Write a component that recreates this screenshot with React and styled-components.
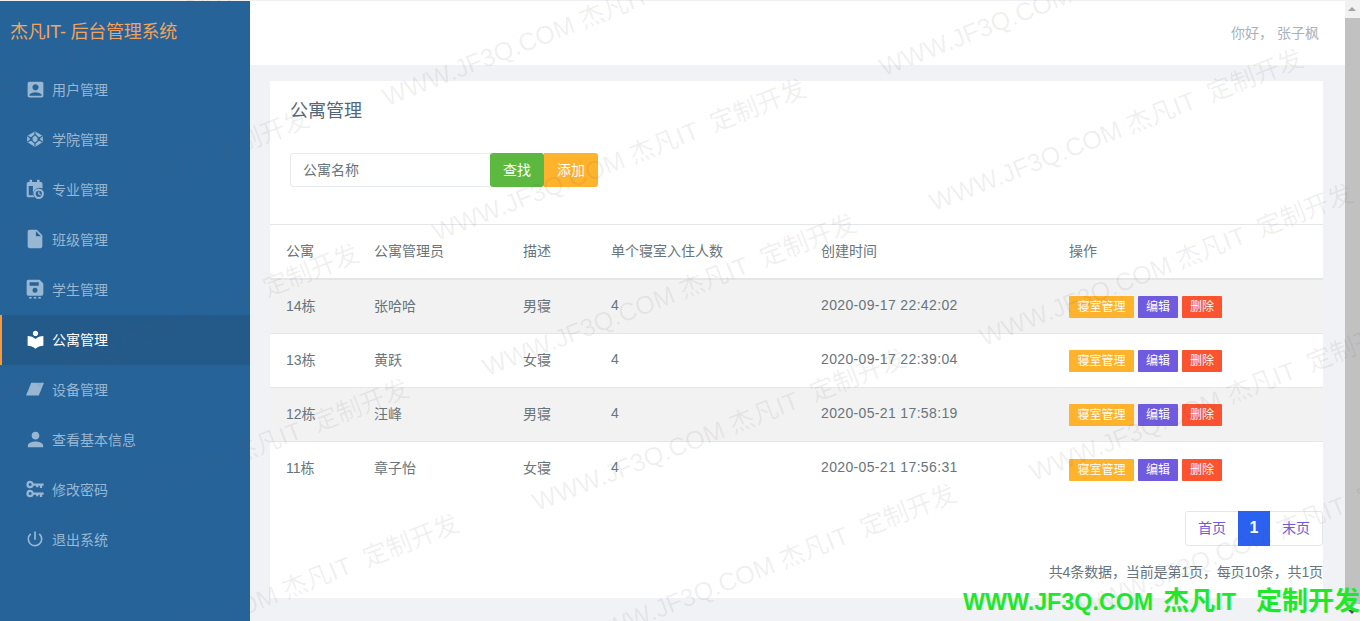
import React from 'react'
import styled, { createGlobalStyle } from 'styled-components'
import { MdAccountBox, MdInsertDriveFile, MdLocalLibrary, MdPerson, MdPowerSettingsNew } from 'react-icons/md'

const FONT = '"Liberation Sans", "Noto Sans CJK SC", sans-serif'
const SIDEBAR = '#266399'

const GlobalStyle = createGlobalStyle`
  html, body { margin: 0; padding: 0; height: 100%; overflow: hidden; }
  body { font-family: ${FONT}; background: #f0f2f5; }
  * { box-sizing: border-box; }
`

const CodepenIcon = () => (
  <svg viewBox="0 0 24 24" width="18" height="18">
    <path d="M12 1.500 L22.500 8 V16 L12 22.500 L1.500 16 V8 Z" fill="currentColor" />
    <path d="M12 6 L18.500 12 L12 18 L5.500 12 Z M12 2 V6 M12 18 V22 M2 8 L8.500 12 L2 16 M22 8 L15.500 12 L22 16" fill="none" stroke={SIDEBAR} strokeWidth="1.600" />
    <path d="M12 9.500 L14.500 12 L12 14.500 L9.500 12 Z" fill="currentColor" />
  </svg>
)

const CalendarIcon = () => (
  <svg viewBox="0 0 24 24" width="20" height="20" fill="currentColor">
    <path fillRule="evenodd" d="M5.500 1h3v2.500h6V1h3v2.500H19A2 2 0 0 1 21 5.500V11.500a7.500 7.500 0 0 0-10 10.500H4A2 2 0 0 1 2 20V5.500A2 2 0 0 1 4 3.500h1.500Z M4.500 8.500V19.500h5V8.500Z" />
    <path fillRule="evenodd" d="M16.500 11.500a6.200 6.200 0 1 1 0 12.400a6.200 6.200 0 0 1 0-12.400Z M16.500 14a3.700 3.700 0 1 0 0 7.400a3.700 3.700 0 0 0 0-7.400Z M15.800 15h1.500v2.500l2 1.200-.7 1.200-2.800-1.700Z" />
  </svg>
)

const FloppyIcon = () => (
  <svg viewBox="0 0 24 24" width="20" height="20" fill="currentColor">
    <path fillRule="evenodd" d="M4 1h13.500L22 5.500V18a2 2 0 0 1-2 2H4a2 2 0 0 1-2-2V3a2 2 0 0 1 2-2Z M5.500 4v4h11V4Z M12 10.500a3 3 0 1 0 0 6a3 3 0 0 0 0-6Z" />
    <rect x="5" y="21.500" width="3" height="2" />
    <rect x="10.500" y="21.500" width="3" height="2" />
    <rect x="16" y="21.500" width="3" height="2" />
  </svg>
)

const SlantIcon = () => (
  <svg viewBox="0 0 24 24" width="18" height="18" fill="currentColor">
    <path d="M7 3.500H24L17 20.500H0Z" />
  </svg>
)

const KeysIcon = () => (
  <svg viewBox="0 0 24 24" width="18" height="18" fill="currentColor">
    <path fillRule="evenodd" d="M5.500 1a5 5 0 0 1 4.800 3.500H23.500v3h-2v3h-3v-3h-2v2h-3v-2h-3.200A5 5 0 1 1 5.500 1Z M5.500 4a2 2 0 1 0 0 4a2 2 0 0 0 0-4Z" />
    <path fillRule="evenodd" d="M5.500 13a5 5 0 0 1 4.800 3.500H23.500v3h-2v3h-3v-3h-2v2h-3v-2h-3.200A5 5 0 1 1 5.500 13Z M5.500 16a2 2 0 1 0 0 4a2 2 0 0 0 0-4Z" />
  </svg>
)

const menu = [
  { label: '用户管理', icon: <MdAccountBox size={21} /> },
  { label: '学院管理', icon: <CodepenIcon /> },
  { label: '专业管理', icon: <CalendarIcon /> },
  { label: '班级管理', icon: <MdInsertDriveFile size={22} /> },
  { label: '学生管理', icon: <FloppyIcon /> },
  { label: '公寓管理', icon: <MdLocalLibrary size={21} />, active: true },
  { label: '设备管理', icon: <SlantIcon /> },
  { label: '查看基本信息', icon: <MdPerson size={23} /> },
  { label: '修改密码', icon: <KeysIcon /> },
  { label: '退出系统', icon: <MdPowerSettingsNew size={20} /> },
]

const rows = [
  ['14栋', '张哈哈', '男寝', '4', '2020-09-17 22:42:02'],
  ['13栋', '黄跃', '女寝', '4', '2020-09-17 22:39:04'],
  ['12栋', '汪峰', '男寝', '4', '2020-05-21 17:58:19'],
  ['11栋', '章子怡', '女寝', '4', '2020-05-21 17:56:31'],
]

const heads = ['公寓', '公寓管理员', '描述', '单个寝室入住人数', '创建时间', '操作']

// the watermark repeats on a slanted grid
const marks = []
for (let r = -1; r < 5; r++) {
  for (let c = -1; c < 3; c++) {
    marks.push({ x: 389 + r * 50 + c * 497, y: 112 + r * 135 - c * 30 })
  }
}

function App() {
  return (
    <Page>
      <GlobalStyle />
      <TopLine />
      <Body>
        <Sidebar>
          <Brand>杰凡IT- 后台管理系统</Brand>
          <Menu>
            {menu.map((m) => (
              <MenuItem key={m.label} $active={m.active}>
                <MenuIcon>{m.icon}</MenuIcon>
                {m.label}
              </MenuItem>
            ))}
          </Menu>
        </Sidebar>
        <Main>
          <Header>你好， 张子枫</Header>
          <Content>
            <Card>
              <CardHead>
                <Title>公寓管理</Title>
                <SearchBar>
                  <SearchInput placeholder="公寓名称" />
                  <BarButton $color="#5cb83f">查找</BarButton>
                  <BarButton $color="#ffb22b" $last>添加</BarButton>
                </SearchBar>
              </CardHead>
              <HeadRow>
                {heads.map((h) => <Cell key={h}>{h}</Cell>)}
              </HeadRow>
              {rows.map((row, i) => (
                <Row key={row[0]} $odd={i % 2 === 0}>
                  {row.map((v, j) => <Cell key={j} $num={j === 4}>{v}</Cell>)}
                  <ActionCell>
                    <Actions>
                      <Tag $color="#ffb22b" $width={65}>寝室管理</Tag>
                      <Tag $color="#6f5ae0" $width={40}>编辑</Tag>
                      <Tag $color="#fb5230" $width={40}>删除</Tag>
                    </Actions>
                  </ActionCell>
                </Row>
              ))}
              <Footer>
                <Pager>
                  <PageLink>首页</PageLink>
                  <PageCurrent>1</PageCurrent>
                  <PageLink>末页</PageLink>
                </Pager>
                <Summary>共4条数据，当前是第1页，每页10条，共1页</Summary>
              </Footer>
            </Card>
          </Content>
        </Main>
        <Scrollbar>
          <Arrow $up />
          <Thumb />
          <Arrow />
        </Scrollbar>
      </Body>
      {marks.map((m) => (
        <Mark key={`${m.x}-${m.y}`} style={{ left: m.x, top: m.y }}>WWW.JF3Q.COM 杰凡IT&nbsp;&nbsp;定制开发</Mark>
      ))}
      <Stamp>WWW.JF3Q.COM<StampCjk $gap={10}>杰凡</StampCjk>IT<StampCjk $gap={20}>定制开发</StampCjk></Stamp>
    </Page>
  )
}
export default App

const Page = styled.div`
  position: relative;
  display: flex;
  flex-direction: column;
  width: 1360px;
  height: 621px;
  overflow: hidden;
  background: #f0f2f5;
`

const TopLine = styled.div`
  height: 1px;
  flex: none;
  background: #eef0f3;
`

const Body = styled.div`
  display: flex;
  flex: 1;
  min-height: 0;
`

const Sidebar = styled.aside`
  width: 250px;
  flex: none;
  background: ${SIDEBAR};
`

const Brand = styled.div`
  height: 64px;
  padding-left: 10px;
  line-height: 63px;
  font-size: 18px;
  letter-spacing: -0.25px;
  color: #f4a35c;
  white-space: nowrap;
`

const Menu = styled.nav`
  display: flex;
  flex-direction: column;
`

const MenuItem = styled.div`
  display: flex;
  align-items: center;
  height: 50px;
  padding: 0 0 2px 25px;
  font-size: 14px;
  color: ${(p) => (p.$active ? '#ffffff' : '#98b7d3')};
  background: ${(p) => (p.$active ? '#235a8a' : 'transparent')};
  border-left: 2px solid ${(p) => (p.$active ? '#f79a3e' : 'transparent')};
`

const MenuIcon = styled.span`
  display: flex;
  align-items: center;
  justify-content: center;
  width: 16px;
  margin-right: 9px;
  & svg { flex: none; }
`

const Main = styled.main`
  flex: 1;
  min-width: 0;
  display: flex;
  flex-direction: column;
`

const Header = styled.header`
  height: 64px;
  flex: none;
  background: #ffffff;
  padding-right: 26px;
  text-align: right;
  line-height: 64px;
  font-size: 14px;
  color: #a9b2ba;
`

const Content = styled.div`
  padding: 16px 22px 0 20px;
  flex: 1;
`

const Card = styled.section`
  background: #ffffff;
  height: 517px;
`

const CardHead = styled.div`
  padding: 18px 20px 37px;
  height: 144px;
  border-bottom: 1px solid #e4e7ea;
`

const Title = styled.h2`
  margin: 0 0 29px;
  font-size: 18px;
  font-weight: 400;
  line-height: 25px;
  color: #54667a;
`

const SearchBar = styled.div`
  display: flex;
  height: 34px;
`

const SearchInput = styled.input`
  width: 200px;
  height: 34px;
  padding: 0 12px;
  border: 1px solid #e9ecef;
  border-right: none;
  border-radius: 3px 0 0 3px;
  outline: none;
  background: transparent;
  font-family: ${FONT};
  font-size: 14px;
  &::placeholder { color: #67757c; opacity: 1; }
`

const BarButton = styled.button`
  width: 54px;
  height: 34px;
  padding: 0 0 2px;
  border: none;
  border-radius: ${(p) => (p.$last ? '0 3px 3px 0' : '3px')};
  background: ${(p) => p.$color};
  color: #ffffff;
  font-family: ${FONT};
  font-size: 14px;
`

const tableColumns = '88px 149px 88px 210px 248px 1fr'

const HeadRow = styled.div`
  display: grid;
  grid-template-columns: ${tableColumns};
  align-items: center;
  height: 55px;
  border-bottom: 2px solid #e4e7ea;
  font-size: 14px;
  color: #67757c;
`

const Row = styled.div`
  display: grid;
  grid-template-columns: ${tableColumns};
  align-items: center;
  height: 54px;
  border-bottom: 1px solid #e4e7ea;
  font-size: 14px;
  color: #67757c;
  background: ${(p) => (p.$odd ? '#f2f2f2' : '#ffffff')};
  &:nth-last-child(2) { border-bottom: none; }
`

const Cell = styled.div`
  padding: 0 0 4px 16px;
  letter-spacing: ${(p) => (p.$num ? '0.35px' : '0')};
  white-space: nowrap;
`

const ActionCell = styled.div`
  padding-left: 16px;
`

const Actions = styled.div`
  display: flex;
  gap: 4px;
  margin-top: 1px;
`

const Tag = styled.span`
  width: ${(p) => p.$width}px;
  height: 22px;
  line-height: 22px;
  text-align: center;
  font-size: 12px;
  color: #ffffff;
  background: ${(p) => p.$color};
  border-radius: 1px;
`

const Footer = styled.div`
  display: flex;
  flex-direction: column;
  align-items: flex-end;
  padding-top: 15px;
`

const Pager = styled.div`
  display: flex;
  height: 35px;
  border: 1px solid #e4e7ea;
  border-radius: 3px;
`

const PageLink = styled.span`
  width: 52px;
  line-height: 33px;
  text-align: center;
  font-size: 14px;
  color: #6f5ae0;
`

const PageCurrent = styled.span`
  width: 32px;
  margin: -1px 0;
  line-height: 33px;
  text-align: center;
  font-size: 16px;
  font-weight: 700;
  color: #ffffff;
  background: #2b61f0;
`

const Summary = styled.div`
  margin-top: 16px;
  line-height: 20px;
  font-size: 14px;
  letter-spacing: -0.12px;
  color: #67757c;
`

const Scrollbar = styled.div`
  width: 15px;
  flex: none;
  display: flex;
  flex-direction: column;
  background: #f1f1f1;
`

const Arrow = styled.div`
  height: 17px;
  flex: none;
  position: relative;
  &::after {
    content: '';
    position: absolute;
    left: 3px;
    top: 6px;
    border-left: 4px solid transparent;
    border-right: 4px solid transparent;
    ${(p) => (p.$up ? 'border-bottom: 4px solid #a3a3a3;' : 'border-top: 4px solid #505050;')}
  }
`

const Thumb = styled.div`
  flex: 1;
  background: #c1c1c1;
`

const Mark = styled.div`
  position: absolute;
  transform-origin: 0 100%;
  transform: translateY(-100%) rotate(-21.5deg);
  white-space: nowrap;
  font-size: 25.2px;
  line-height: 30px;
  color: rgba(90, 90, 90, 0.09);
  pointer-events: none;
`

const Stamp = styled.div`
  position: absolute;
  right: 0;
  bottom: 5px;
  display: flex;
  align-items: baseline;
  white-space: nowrap;
  font-size: 23.3px;
  line-height: 28px;
  font-weight: 700;
  color: #1ee82b;
`

const StampCjk = styled.span`
  margin-left: ${(p) => p.$gap}px;
  font-size: 26px;
  font-weight: 700;
`
